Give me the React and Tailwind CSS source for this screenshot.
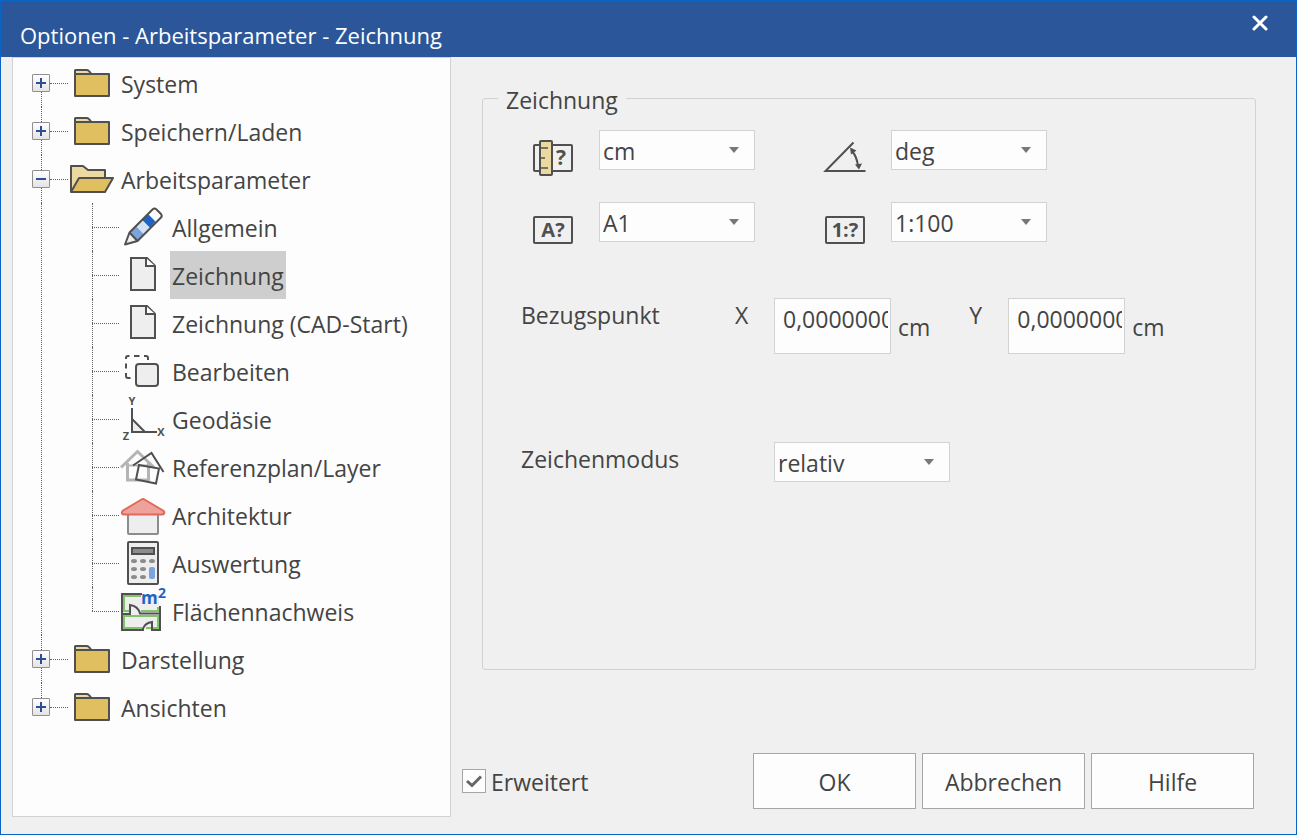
import React, { useState } from 'react';

const INK = '#505050';

const FolderIcon = () => (
  <svg className="size-12 shrink-0" viewBox="0 0 48 48" stroke={INK} strokeWidth="2" strokeLinejoin="round">
    <path d="M7 15V11.5Q7 11 7.5 11H19Q20.500 11 23 14.500" fill="#ecd9a0" />
    <rect x="7" y="15" width="34" height="22" fill="#e0bf60" />
  </svg>
);

const OpenFolderIcon = () => (
  <svg className="size-12 shrink-0" viewBox="0 0 48 48" stroke={INK} strokeWidth="2" strokeLinejoin="round">
    <path d="M3 37V11H15L20 15H37V23" fill="#ecd9a0" />
    <path d="M3 37L11 23H45L37 37Z" fill="#e0bf60" />
  </svg>
);

const PencilIcon = () => (
  <svg className="size-12 shrink-0" viewBox="0 0 48 48">
    <path d="M29 11L36.5 18.500 31 25 23 17Z" fill="#1f63c6" />
    <path d="M23 17L31 25 25 31.500 17 23Z" fill="#d3e1f5" />
    <path d="M17 23L25 31.500 18.500 38 10.500 29.500Z" fill="#7ba3de" />
    <path d="M10.500 29.500L6 41.500 18.500 38Z" fill="#eee" />
    <path
      d="M10.500 29.500L33.500 6.500Q35.500 4.500 37.500 6.500L42 11Q43.500 13 42 14.500L18.500 38L6 41.500ZL18.500 38"
      fill="none"
      stroke={INK}
      strokeWidth="2"
      strokeLinejoin="round"
    />
  </svg>
);

const PageIcon = () => (
  <svg className="size-12 shrink-0" viewBox="0 0 48 48" stroke={INK} strokeWidth="2">
    <path d="M12 7H28L36 15V39H12Z" fill="#eee" />
    <path d="M27 7V15H36" fill="#fff" />
  </svg>
);

const EditIcon = () => (
  <svg className="size-12 shrink-0" viewBox="0 0 48 48" stroke={INK} strokeWidth="2" fill="none">
    <path d="M7 12V11Q7 9 9 9H10.500M15 9H20.500M25 9H27Q29 9 29 11V13M7 16.500V21.500M7 26V29Q7 31 9 31H11.500" />
    <rect x="17" y="17" width="22" height="22" rx="3" fill="#eee" />
  </svg>
);

const AxesIcon = () => (
  <svg className="size-12 shrink-0 overflow-visible" viewBox="0 0 48 48" stroke={INK} strokeWidth="2" fill="none">
    <path d="M13 24V37H26Z" fill="#eee" />
    <path d="M13 13V37H38" />
    <g fill={INK} stroke="none" fontSize="11" fontWeight="700" textAnchor="middle">
      <text x="13" y="10">Y</text>
      <text x="42" y="41">X</text>
      <text x="7" y="45">Z</text>
    </g>
  </svg>
);

const LayerIcon = () => (
  <svg className="size-12 shrink-0" viewBox="0 0 48 48" fill="none">
    <g stroke="#b4b4b4" strokeWidth="3">
      <path d="M2 24.500L18.500 8.500 35 24.500" />
      <path d="M8.500 20V37H29.500V20" />
      <path d="M8 22.500H29" strokeWidth="2" />
    </g>
    <g stroke={INK} strokeWidth="2">
      <path d="M14 22.500L32.500 10 44.500 29" />
      <path d="M20 22L40 25.500 37 40.500 17 36.500Z" />
    </g>
  </svg>
);

const HouseIcon = () => (
  <svg className="size-12 shrink-0" viewBox="0 0 48 48" strokeWidth="2" strokeLinejoin="round">
    <path d="M9 23H39V42Q39 43 38 43H10Q9 43 9 42Z" fill="#eee" stroke="#8c8c8c" />
    <path
      d="M22.500 8.500Q24 7.500 25.500 8.500L44 19.500Q46 21 45 22.500Q44.500 23.500 43 23.500H5Q3.500 23.500 3 22.500Q2.500 21 4 19.500Z"
      fill="#eda39b"
      stroke="#e2685a"
    />
  </svg>
);

const CalculatorIcon = () => (
  <svg className="size-12 shrink-0" viewBox="0 0 48 48">
    <rect x="9" y="3" width="30" height="42" rx="1" fill="#eee" stroke={INK} strokeWidth="2" />
    <rect x="13" y="9" width="22" height="6" fill="#8c8c8c" stroke={INK} strokeWidth="2" />
    {[15, 24, 33].map((cx) =>
      [22, 30, 38].map((cy) => <ellipse key={`${cx}-${cy}`} cx={cx} cy={cy} rx="3" ry="2" fill="#8c8c8c" />)
    )}
    <rect x="29" y="27" width="8" height="14" fill="#eee" />
    <rect x="30" y="28" width="6" height="12" rx="2" fill="#7ba3de" />
  </svg>
);

const AreaIcon = () => (
  <svg className="size-12 shrink-0 overflow-visible" viewBox="0 0 48 48" fill="none">
    <rect x="3" y="7" width="38" height="36" fill="#eee" />
    <g stroke="#82c46a" strokeWidth="2">
      <path d="M22 9H5V24H10M22 24H39V20M27 41H39V29H5V41H23" />
      <path d="M12 24H20" />
    </g>
    <g stroke={INK} strokeWidth="2">
      <path d="M23 7H3V43H24V41.500Q26 36 33 35V43H41V19" />
      <path d="M3 27H11V18Q19 19 21 26.500H41" fill="#eee" />
    </g>
    <rect x="23" y="1" width="24" height="17" fill="#fdfdfd" />
    <path d="M23 8H40V18H23Z" fill="#eee" />
    <g fill="#1f63c6" fontWeight="700">
      <text x="22" y="17" fontSize="17">m</text>
      <text x="39" y="11" fontSize="14">2</text>
    </g>
  </svg>
);

const UnitIcon = () => (
  <svg className="size-12 shrink-0" viewBox="0 0 48 48" fill="none" stroke={INK} strokeWidth="2">
    <rect x="5" y="12" width="38" height="26" rx="1" />
    <rect x="11" y="8" width="12" height="34" rx="1" fill="#ecd9a0" />
    <path d="M11 15H19M11 25H16M11 35H19" strokeWidth="1.500" />
    <text x="32" y="32" fill={INK} stroke="none" fontSize="21" fontWeight="700" textAnchor="middle">?</text>
  </svg>
);

const AngleIcon = () => (
  <svg className="size-12 shrink-0" viewBox="0 0 48 48" fill="none" stroke={INK} strokeWidth="2">
    <path d="M32.500 9.500L4.500 38H44.500" />
    <path d="M31 18Q36 24 37 33" />
    <path d="M29 14.500L35.500 17.500 30 21.500ZM38 36.500L34 31.500 41 30.500Z" fill={INK} stroke="none" />
  </svg>
);

const BoxedTextIcon = ({ text }) => (
  <svg className="size-12 shrink-0" viewBox="0 0 48 48">
    <rect x="5" y="12" width="38" height="26" rx="1" fill="none" stroke={INK} strokeWidth="2" />
    <text x="24" y="32" fill={INK} fontSize="20" fontWeight="700" textAnchor="middle">{text}</text>
  </svg>
);

const tree = [
  { label: 'System' },
  { label: 'Speichern/Laden' },
  {
    label: 'Arbeitsparameter',
    children: [
      { label: 'Allgemein', icon: PencilIcon },
      { label: 'Zeichnung', icon: PageIcon },
      { label: 'Zeichnung (CAD-Start)', icon: PageIcon },
      { label: 'Bearbeiten', icon: EditIcon },
      { label: 'Geodäsie', icon: AxesIcon },
      { label: 'Referenzplan/Layer', icon: LayerIcon },
      { label: 'Architektur', icon: HouseIcon },
      { label: 'Auswertung', icon: CalculatorIcon },
      { label: 'Flächennachweis', icon: AreaIcon },
    ],
  },
  { label: 'Darstellung' },
  { label: 'Ansichten' },
];

const TreeLabel = ({ label, selected, onSelect }) => (
  <button
    type="button"
    onClick={onSelect}
    className={`ml-[3px] h-12 px-[2px] pt-[2px] whitespace-nowrap ${selected ? 'bg-[#cecece]' : ''}`}
  >
    {label}
  </button>
);

const TreeNode = ({ node, first, last, selected, onSelect }) => {
  const [open, setOpen] = useState(Boolean(node.children));

  return (
    <li>
      <div className="flex h-12 items-center pl-[19px]">
        <div className="flex h-full w-[18px] flex-col">
          <span className={`ml-[9px] flex-1 ${first ? '' : 'border-l border-dotted border-[#606060]'}`}></span>
          <button
            type="button"
            aria-label={node.label}
            aria-expanded={open}
            onClick={() => setOpen(!open)}
            className="flex size-[18px] items-center justify-center rounded-[1px] border border-[#909090] bg-linear-to-b from-white to-[#e4e4e4]"
          >
            <svg className="size-4" viewBox="0 0 16 16" stroke="#2f4c96" strokeWidth="2">
              <path d={open ? 'M3 8H13' : 'M3 8H13M8 3V13'} />
            </svg>
          </button>
          <span className={`ml-[9px] flex-1 ${last ? '' : 'border-l border-dotted border-[#606060]'}`}></span>
        </div>
        <span className="w-[18px] border-t border-dotted border-[#606060]"></span>
        {open ? <OpenFolderIcon /> : <FolderIcon />}
        <TreeLabel label={node.label} selected={selected === node.label} onSelect={() => onSelect(node.label)} />
      </div>

      {open && node.children && (
        <ul className="ml-7 border-l border-dotted border-[#606060] pl-[50px]">
          {node.children.map(({ label, icon: Icon }, i) => (
            <li key={label} className="flex h-12 items-center">
              <div className="h-full w-[27px]">
                <div className="h-6 border-l border-dotted border-[#606060]"></div>
                <div
                  className={`h-6 border-t border-dotted border-[#606060] ${
                    i < node.children.length - 1 ? 'border-l' : ''
                  }`}
                ></div>
              </div>
              <Icon />
              <TreeLabel label={label} selected={selected === label} onSelect={() => onSelect(label)} />
            </li>
          ))}
        </ul>
      )}
    </li>
  );
};

const Select = ({ id, label, options, className }) => (
  <div className={`relative h-10 ${className}`}>
    <select
      id={id}
      aria-label={label}
      className="size-full appearance-none border border-[#d2d2d2] bg-[#fdfdfd] pt-px pr-8 pl-[3px]"
    >
      {options.map((option) => (
        <option key={option}>{option}</option>
      ))}
    </select>
    <svg className="pointer-events-none absolute top-[17px] right-[15px] h-[6px] w-[12px]" viewBox="0 0 12 6" fill="#777">
      <path d="M1 0H11L6 6Z" />
    </svg>
  </div>
);

const IconField = ({ id, label, icon, options }) => (
  <div className="flex items-start">
    <label htmlFor={id} className="mt-[3px] mr-[22px] ml-2">{icon}</label>
    <Select id={id} label={label} options={options} className="w-[156px]" />
  </div>
);

const Coordinate = ({ axis, value, onChange }) => (
  <div className="flex h-14">
    <label htmlFor={`ref-${axis}`} className="w-[39px] pt-px">{axis}</label>
    <input
      id={`ref-${axis}`}
      type="text"
      value={value}
      onChange={(e) => onChange(e.target.value)}
      className="h-14 w-[117px] border border-[#d2d2d2] bg-[#fdfdfd] pr-[2px] pb-[14px] pl-2"
    />
    <span className="ml-[7px] pt-[13px]">cm</span>
  </div>
);

const DialogButton = ({ children }) => (
  <button type="button" className="h-14 w-[163px] border border-[#a6a6a6] bg-[#fdfdfd] pt-[2px] hover:bg-[#e6e6e6]">
    {children}
  </button>
);

const App = () => {
  const [selected, setSelected] = useState('Zeichnung');
  const [x, setX] = useState('0,0000000');
  const [y, setY] = useState('0,0000000');
  const [extended, setExtended] = useState(true);

  return (
    <div className="flex min-h-screen flex-col border border-[#0a64c8] bg-[#f0f0f0] font-['Open_Sans',sans-serif] text-[23px] leading-8 text-[#444]">
      <header className="flex h-14 items-start justify-between bg-[#2b579a] pr-7 pl-[19px] text-white">
        <h1 className="pt-[18px] text-[22px]">Optionen - Arbeitsparameter - Zeichnung</h1>
        <button type="button" aria-label="Schließen" className="mt-[14px]">
          <svg className="size-4" viewBox="0 0 16 16" stroke="#fff" strokeWidth="3" strokeLinecap="round">
            <path d="M2 2L14 14M14 2L2 14" />
          </svg>
        </button>
      </header>

      <div className="flex flex-1">
        {/* Left: option tree */}
        <nav className="mb-[17px] ml-[11px] w-[439px] shrink-0 border border-[#d2d2d2] bg-[#fdfdfd] pt-px">
          <ul>
            {tree.map((node, i) => (
              <TreeNode
                key={node.label}
                node={node}
                first={i === 0}
                last={i === tree.length - 1}
                selected={selected}
                onSelect={setSelected}
              />
            ))}
          </ul>
        </nav>

        {/* Right: settings */}
        <main className="flex flex-1 flex-col pt-6 pb-[25px]">
          <fieldset className="mr-10 ml-[31px] flex-1 rounded-[3px] border border-[#d2d2d2] pl-[38px]">
            <legend className="-ml-[23px] h-[34px] px-2 pt-[3px]">Zeichnung</legend>

            <div className="flex flex-col pt-[15px]">
              <div className="flex flex-wrap gap-x-[58px] gap-y-[21px]">
                <div className="flex flex-col gap-[21px]">
                  <IconField id="unit" label="Einheit" icon={<UnitIcon />} options={['cm', 'mm', 'm']} />
                  <IconField id="paper" label="Blattformat" icon={<BoxedTextIcon text="A?" />} options={['A1', 'A0', 'A2', 'A3', 'A4']} />
                </div>
                <div className="flex flex-col gap-[21px]">
                  <IconField id="angle" label="Winkel" icon={<AngleIcon />} options={['deg', 'rad', 'gon']} />
                  <IconField id="scale" label="Maßstab" icon={<BoxedTextIcon text="1:?" />} options={['1:100', '1:50', '1:20']} />
                </div>
              </div>

              <div className="mt-[45px] flex">
                <span className="w-[214px] pt-px">Bezugspunkt</span>
                <div className="flex gap-[39px]">
                  <Coordinate axis="X" value={x} onChange={setX} />
                  <Coordinate axis="Y" value={y} onChange={setY} />
                </div>
              </div>

              <div className="mt-[88px] flex">
                <label htmlFor="mode" className="w-[253px] pt-px">Zeichenmodus</label>
                <Select id="mode" options={['relativ', 'absolut']} className="w-[176px]" />
              </div>
            </div>
          </fieldset>

          <div className="mt-[83px] flex items-center justify-between pr-[42px] pl-[11px]">
            <label className="flex items-center gap-[5px]">
              <span className="relative size-6">
                <input
                  type="checkbox"
                  checked={extended}
                  onChange={(e) => setExtended(e.target.checked)}
                  className="block size-6 appearance-none border border-[#a6a6a6] bg-[#fdfdfd]"
                />
                {extended && (
                  <svg className="pointer-events-none absolute inset-0 size-6" viewBox="0 0 24 24" fill="none" stroke="#666" strokeWidth="3">
                    <path d="M5 12L10 16.500 19 7.500" />
                  </svg>
                )}
              </span>
              <span className="pt-[2px]">Erweitert</span>
            </label>
            <div className="flex gap-[6px]">
              <DialogButton>OK</DialogButton>
              <DialogButton>Abbrechen</DialogButton>
              <DialogButton>Hilfe</DialogButton>
            </div>
          </div>
        </main>
      </div>
    </div>
  );
};

export default App;
